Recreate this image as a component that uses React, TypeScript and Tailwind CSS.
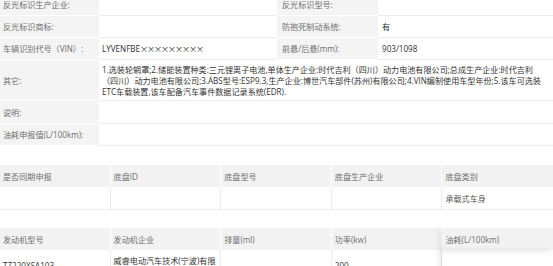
const topRows = [
  ["反光标识生产企业:", "", "反光标识型号:", ""],
  ["反光标识商标:", "", "防抱死制动系统:", "有"],
  ["车辆识别代号（VIN）:", "vin", "前悬/后悬(mm):", "903/1098"],
];

const labelCell = "flex items-center bg-[#f4f4f4] text-[#6f6f6f] border-b border-white px-[3px]";
const valueCell = "flex items-center text-[#333] border-b border-[#ececec] px-[3px]";

const chassisHead = ["是否同期申报", "底盘ID", "底盘型号", "底盘生产企业", "底盘类别"];
const chassisRow = ["", "", "", "", "承载式车身"];

const engineHead = ["发动机型号", "发动机企业", "排量(ml)", "功率(kw)", "油耗(L/100km)"];

const Vin = () => (
  <span>
    LYVENFBE
    <span className="font-['Noto_Sans_CJK_SC',sans-serif] tracking-[-1.1px]">×××××××××</span>
  </span>
);

const App = () => {
  return (
    <div className="h-[266px] w-[553px] overflow-hidden bg-white font-['Open_Sans','Noto_Sans_CJK_SC',sans-serif] text-[8.1px] leading-[11px]">
      {/* 基本参数 */}
      <div className="-mt-[6px] grid grid-cols-[99px_178px_101px_1fr]">
        {topRows.map((row) => (
          <div key={row[0]} className="contents">
            <div className={`${labelCell} h-[22px]`}>{row[0]}</div>
            <div className={`${valueCell} h-[22px]`}>{row[1] === "vin" ? <Vin /> : row[1]}</div>
            <div className={`${labelCell} h-[22px] pl-[5px]`}>{row[2]}</div>
            <div className={`${valueCell} h-[22px] pl-[4px]`}>{row[3]}</div>
          </div>
        ))}

        {/* 其它 */}
        <div className={`${labelCell} h-[41px]`}>其它:</div>
        <div className={`${valueCell} col-span-3 h-[41px] overflow-hidden`}>
          <p className="whitespace-nowrap">
            1.选装轮辋罩;2.储能装置种类:三元锂离子电池,单体生产企业:时代吉利（四川）动力电池有限公司;总成生产企业:时代吉利
            <br />
            （四川）动力电池有限公司;3.ABS型号:ESP9.3,生产企业:博世汽车部件(苏州)有限公司;4.VIN编制使用车型年份;5.该车可选装
            <br />
            ETC车载装置,该车配备汽车事件数据记录系统(EDR).
          </p>
        </div>

        <div className={`${labelCell} h-[23px]`}>说明:</div>
        <div className={`${valueCell} col-span-3 h-[23px]`}></div>

        <div className={`${labelCell} h-[22px]`}>油耗申报值(L/100km):</div>
        <div className={`${valueCell} col-span-3 h-[22px]`}></div>
      </div>

      {/* 底盘 */}
      <div className="mt-[19px] grid grid-cols-5">
        {chassisHead.map((h, i) => (
          <div
            key={h}
            className={`flex h-[22px] items-center bg-[#f2f2f2] px-[3px] text-[#6f6f6f] ${i < 4 ? "border-r border-white" : ""}`}
          >
            {h}
          </div>
        ))}
        {chassisRow.map((v, i) => (
          <div
            key={i}
            className={`flex h-[23px] items-center border-b border-[#ececec] px-[3px] text-[#555] ${i < 4 ? "border-r" : ""}`}
          >
            {v}
          </div>
        ))}
      </div>

      {/* 发动机 */}
      <div className="mt-[18px] grid grid-cols-5">
        {engineHead.map((h, i) => (
          <div
            key={h}
            className={`flex h-[22px] items-center bg-[#f2f2f2] px-[3px] text-[#6f6f6f] ${
              i < 4 ? "border-r border-white" : "shadow-[-3px_2px_5px_rgba(0,0,0,0.08)]"
            }`}
          >
            {h}
          </div>
        ))}
        <div className="flex h-[32px] items-center border-r border-b border-[#ececec] px-[3px] text-[#333]">TZ220XSA103</div>
        <div className="flex h-[32px] items-center border-r border-b border-[#ececec] px-[3px] text-[#333]">
          <p className="whitespace-nowrap">
            威睿电动汽车技术(宁波)有限
            <br />
            公司
          </p>
        </div>
        <div className="flex h-[32px] items-center border-r border-b border-[#ececec] px-[3px] text-[#333]">-</div>
        <div className="flex h-[32px] items-center border-r border-b border-[#ececec] px-[3px] text-[#333]">200</div>
        <div className="flex h-[32px] items-center border-b border-[#ececec] px-[3px] text-[#333] shadow-[-3px_0_5px_rgba(0,0,0,0.08)]"></div>
      </div>
    </div>
  );
};

export default App;
